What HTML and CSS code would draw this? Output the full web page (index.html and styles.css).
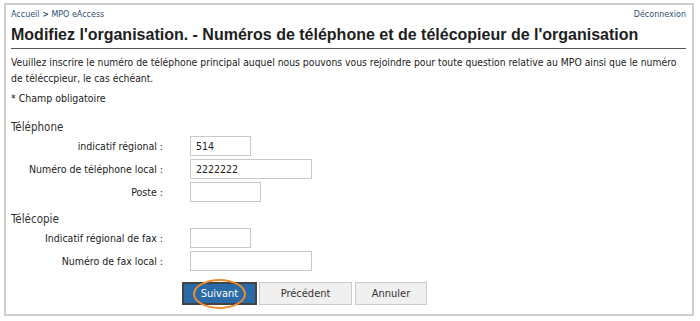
FILE: index.html
```html
<!DOCTYPE html>
<html lang="fr">
<head>
<meta charset="utf-8">
<link rel="stylesheet" href="styles.css">
</head>
<body>
<div class="frame">
  <div class="topbar">
    <div class="crumbs"><a href="#">Accueil</a> <span class="sep">&gt;</span> <a href="#">MPO eAccess</a></div>
    <a class="logout" href="#">Déconnexion</a>
  </div>
  <h1 class="title">Modifiez l'organisation. - Numéros de téléphone et de télécopieur de l'organisation</h1>
  <p class="intro">Veuillez inscrire le numéro de téléphone principal auquel nous pouvons vous rejoindre pour toute question relative au MPO ainsi que le numéro de téléccpieur, le cas échéant.</p>
  <p class="req">* Champ obligatoire</p>

  <div class="section">
    <div class="legend">Téléphone</div>
    <div class="grid">
      <label class="lbl">indicatif régional :</label><input class="in short" value="514">
      <label class="lbl">Numéro de téléphone local :</label><input class="in long" value="2222222">
      <label class="lbl">Poste :</label><input class="in mid" value="">
    </div>
  </div>

  <div class="section fax">
    <div class="legend">Télécopie</div>
    <div class="grid">
      <label class="lbl">Indicatif régional de fax :</label><input class="in short" value="">
      <label class="lbl">Numéro de fax local :</label><input class="in long" value="">
    </div>
  </div>

  <div class="buttons">
    <button class="btn primary"><span class="ring"></span>Suivant</button>
    <button class="btn prev">Précédent</button>
    <button class="btn cancel">Annuler</button>
  </div>
</div>
</body>
</html>
```
FILE: styles.css
```css
* { box-sizing: border-box; }
html, body { margin: 0; padding: 0; background: #fff; }
body {
  font-family: "DejaVu Sans Condensed", "DejaVu Sans", Verdana, sans-serif;
  font-stretch: condensed;
  color: #222;
}
.frame {
  margin: 3px 6px 5px 4px;
  height: 313px;
  border: 2px solid #cfcfcf;
  padding: 3px 4px 0 5px;
}
.topbar {
  display: flex;
  justify-content: space-between;
  align-items: center;
  height: 13px;
  padding-right: 2px;
  font-family: "DejaVu Sans", Verdana, sans-serif;
  font-stretch: normal;
  font-size: 8px;
}
.topbar a { color: #2f4f73; text-decoration: none; }
.sep { color: #2f4f73; font-weight: bold; }
.title {
  margin: 4px 2px 0 0;
  font-family: "Liberation Sans", Arial, sans-serif;
  font-stretch: normal;
  font-size: 16px;
  font-weight: bold;
  color: #1e1e1e;
  line-height: 20px;
  white-space: nowrap;
  padding-bottom: 3px;
  border-bottom: 1px solid #555;
}
.intro {
  margin: 5px 0 0 0;
  font-size: 10.3px;
  line-height: 16px;
  color: #222;
}
.req {
  margin: 4px 0 0 0;
  font-size: 10.5px;
  line-height: 16px;
}
.section { margin-top: 14px; }
.section.fax { margin-top: 10px; }
.legend {
  font-size: 11.5px;
  color: #333;
  line-height: 14px;
}
.grid {
  display: grid;
  grid-template-columns: 152px auto;
  column-gap: 27px;
  row-gap: 3px;
  align-items: center;
  justify-items: start;
  margin-top: 2px;
}
.lbl {
  justify-self: end;
  font-size: 10.5px;
  color: #222;
}
.in {
  height: 20px;
  border: 1px solid #c8c8c8;
  font-family: "DejaVu Sans Condensed", "DejaVu Sans", Verdana, sans-serif;
  font-stretch: condensed;
  font-size: 10.5px;
  padding: 0 5px;
  color: #222;
}
.short { width: 61px; }
.long { width: 122px; }
.mid { width: 71px; }
.buttons {
  display: flex;
  margin: 11px 0 0 171px;
  gap: 2px;
}
.btn {
  position: relative;
  height: 23px;
  font-family: "DejaVu Sans Condensed", "DejaVu Sans", Verdana, sans-serif;
  font-stretch: condensed;
  font-size: 11px;
  border: 1px solid #ccc;
  background: #efefef;
  color: #333;
  padding: 0;
}
.primary {
  width: 75px;
  background: #2a6aa6;
  border: 2px solid #444;
  color: #fff;
}
.prev { width: 93px; }
.cancel { width: 72px; margin-left: 1px; }
.ring {
  position: absolute;
  left: 9px;
  top: -5px;
  width: 53px;
  height: 30px;
  border: 2px solid #f08c2a;
  border-radius: 50%;
}
```
